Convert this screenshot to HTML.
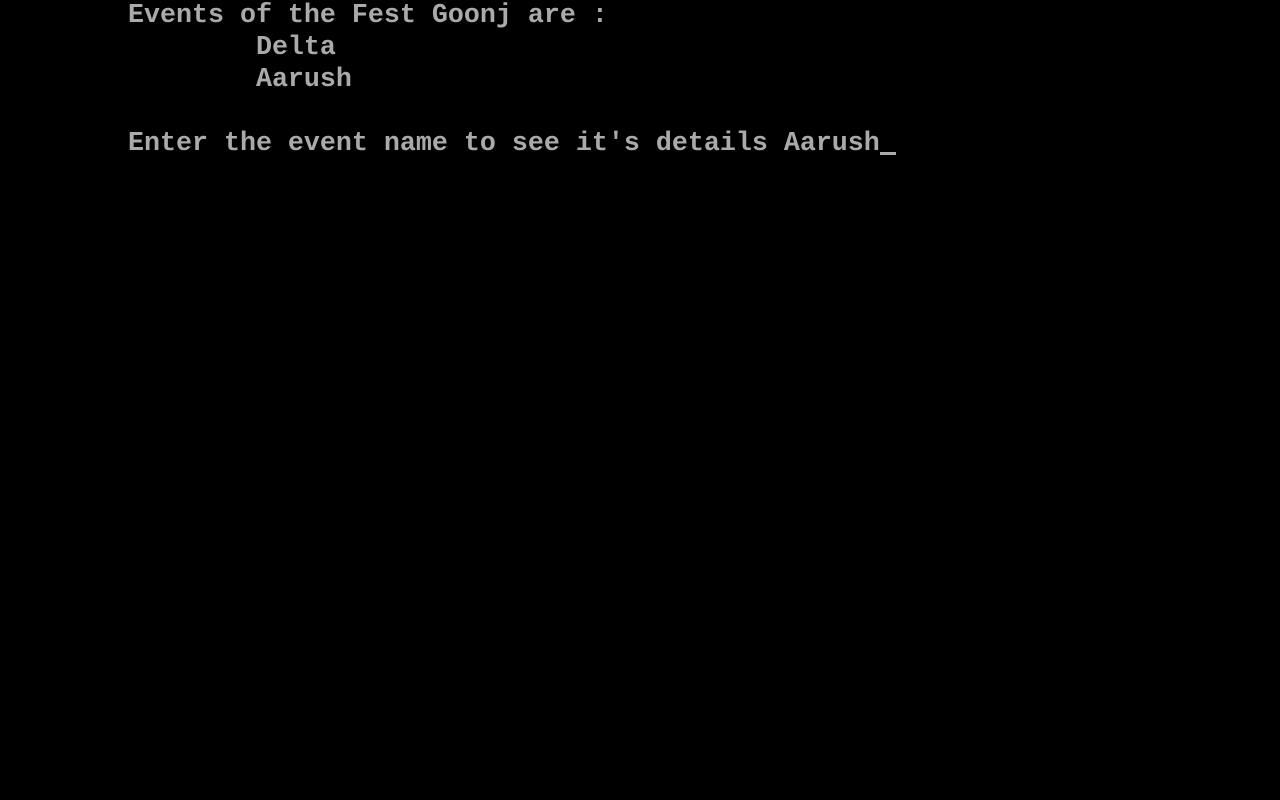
<!DOCTYPE html>
<html><head><meta charset="utf-8"><style>
html,body{margin:0;padding:0;background:#000;width:1280px;height:800px;overflow:hidden}
.r{position:absolute;left:0;height:32px;line-height:32px;font-family:"Liberation Mono",monospace;font-size:26.67px;font-weight:bold;color:#aaa;white-space:pre;letter-spacing:0}
.cur{position:absolute;left:880px;top:152px;width:16px;height:3px;background:#aaa}
</style></head><body>
<div class="r" style="top:0">        Events of the Fest Goonj are :</div>
<div class="r" style="top:32px">                Delta</div>
<div class="r" style="top:64px">                Aarush</div>
<div class="r" style="top:128px">        Enter the event name to see it's details Aarush</div>
<div class="cur"></div>
</body></html>
